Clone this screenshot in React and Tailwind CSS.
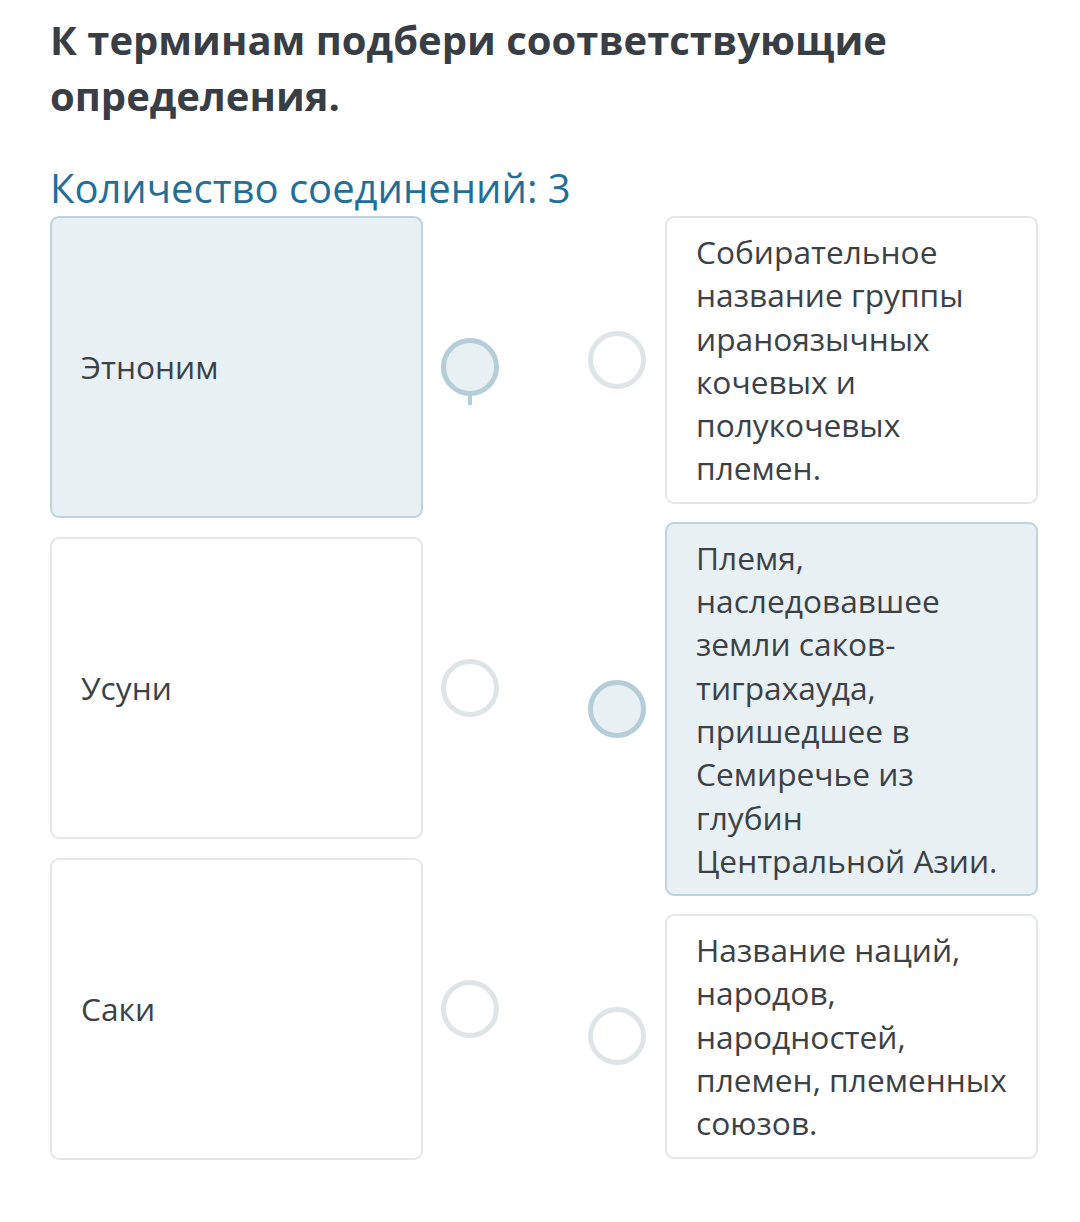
import React from 'react';

const terms = [
  { id: 1, text: 'Этноним', selected: true },
  { id: 2, text: 'Усуни', selected: false },
  { id: 3, text: 'Саки', selected: false },
];

const definitions = [
  { id: 1, text: 'Собирательное название группы ираноязычных кочевых и полукочевых племен.', selected: false },
  { id: 2, text: 'Племя, наследовавшее земли саков-тиграхауда, пришедшее в Семиречье из глубин Центральной Азии.', selected: true },
  { id: 3, text: 'Название наций, народов, народностей, племен, племенных союзов.', selected: false },
];

// Кружок-точка соединения
function Dot({ selected, tail }) {
  return (
    <div
      className={`relative w-[58px] h-[58px] shrink-0 rounded-full border-[5px] ${
        selected ? 'bg-[#e8f0f4] border-[#b4cdd6]' : 'bg-white border-[#dfe4e7]'
      }`}
    >
      {tail && <div className="absolute left-1/2 -translate-x-1/2 top-[50px] w-[4px] h-[12px] bg-[#b4cdd6]" />}
    </div>
  );
}

export default function App() {
  return (
    <div className="bg-white min-h-[1222px] pl-[50px] pr-[42px] pt-[12px] font-['Open_Sans',sans-serif] text-[#3c4146]">
      <h1 className="text-[40px] leading-[56px] font-bold text-[#393e44]">
        К терминам подбери соответствующие определения.
      </h1>

      <div className="mt-[40px] text-[40px] leading-[48px] text-[#1f6f99]">Количество соединений: 3</div>

      <div className="mt-[4px] flex justify-between items-start">
        {/* Левая колонка: термины */}
        <div className="flex flex-col gap-[19px]">
          {terms.map((t) => (
            <div key={t.id} className="flex items-center">
              <div
                className={`w-[373px] h-[302px] flex items-center pl-[29px] rounded-[9px] border-2 text-[31.7px] ${
                  t.selected ? 'bg-[#e8f0f4] border-[#bcd2dc]' : 'bg-white border-[#e3e7ea]'
                }`}
              >
                {t.text}
              </div>
              <div className="ml-[18px]">
                <Dot selected={t.selected} tail={t.selected} />
              </div>
            </div>
          ))}
        </div>

        {/* Правая колонка: определения */}
        <div className="flex flex-col gap-[18px]">
          {definitions.map((d) => (
            <div key={d.id} className="flex items-center">
              <div className="mr-[19px]">
                <Dot selected={d.selected} />
              </div>
              <div
                className={`w-[373px] pl-[29px] pr-[24px] py-[12px] rounded-[9px] border-2 text-[31.7px] leading-[43.3px] ${
                  d.selected ? 'bg-[#e8f0f4] border-[#bcd2dc]' : 'bg-white border-[#e3e7ea]'
                }`}
              >
                {d.text}
              </div>
            </div>
          ))}
        </div>
      </div>
    </div>
  );
}
